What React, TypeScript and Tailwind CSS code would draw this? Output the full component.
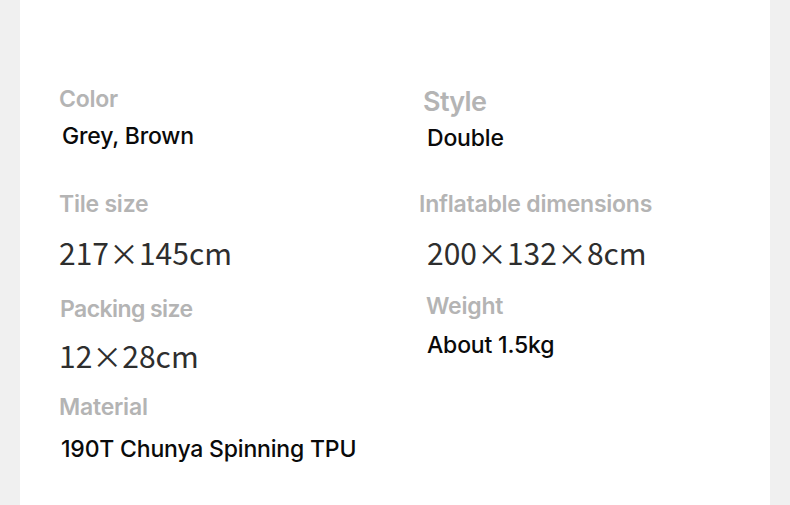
const labelCls =
  "h-[30px] text-[23px] leading-[30px] font-semibold tracking-[-0.01em] text-[#b4b4b4] whitespace-nowrap";
const valueCls =
  "h-[30px] text-[23px] leading-[30px] font-medium tracking-[-0.008em] text-[#0a0a0a] whitespace-nowrap";
const dimCls =
  "h-[40px] text-[30px] leading-[40px] text-[#2e2e2e] whitespace-nowrap [font-family:'Noto_Sans_CJK_SC',sans-serif]";

export default function App() {
  return (
    <div className="min-h-[505px] w-[790px] bg-[#f0f0f0] px-[20px] [font-family:Inter,'Noto_Sans',sans-serif]">
      <div className="grid h-[505px] grid-cols-[364px_1fr] bg-white pl-[39px]">
        {/* left column */}
        <div className="flex flex-col pt-[84px]">
          <div className={labelCls}>Color</div>
          <div className={`${valueCls} mt-[7px] ml-[3px]`}>Grey, Brown</div>
          <div className={`${labelCls} mt-[38px]`}>Tile size</div>
          <div className={`${dimCls} mt-[13px]`}>217×145cm</div>
          <div className={`${labelCls} mt-[22px] ml-[1px] tracking-[-0.025em]`}>Packing size</div>
          <div className={`${dimCls} mt-[11px]`}>12×28cm</div>
          <div className={`${labelCls} mt-[17px]`}>Material</div>
          <div className={`${valueCls} mt-[12px] ml-[2px]`}>190T Chunya Spinning TPU</div>
        </div>

        {/* right column */}
        <div className="flex flex-col pt-[85px]">
          <div className="h-[34px] text-[27px] leading-[34px] font-semibold tracking-tight text-[#b4b4b4]">
            Style
          </div>
          <div className={`${valueCls} mt-[4px] ml-[4px]`}>Double</div>
          <div className={`${labelCls} mt-[36px] -ml-[4px]`}>Inflatable dimensions</div>
          <div className={`${dimCls} mt-[13px] ml-[4px]`}>200×132×8cm</div>
          <div className={`${labelCls} mt-[19px] ml-[3px]`}>Weight</div>
          <div className={`${valueCls} mt-[9px] ml-[4px]`}>About 1.5kg</div>
        </div>
      </div>
    </div>
  );
}
